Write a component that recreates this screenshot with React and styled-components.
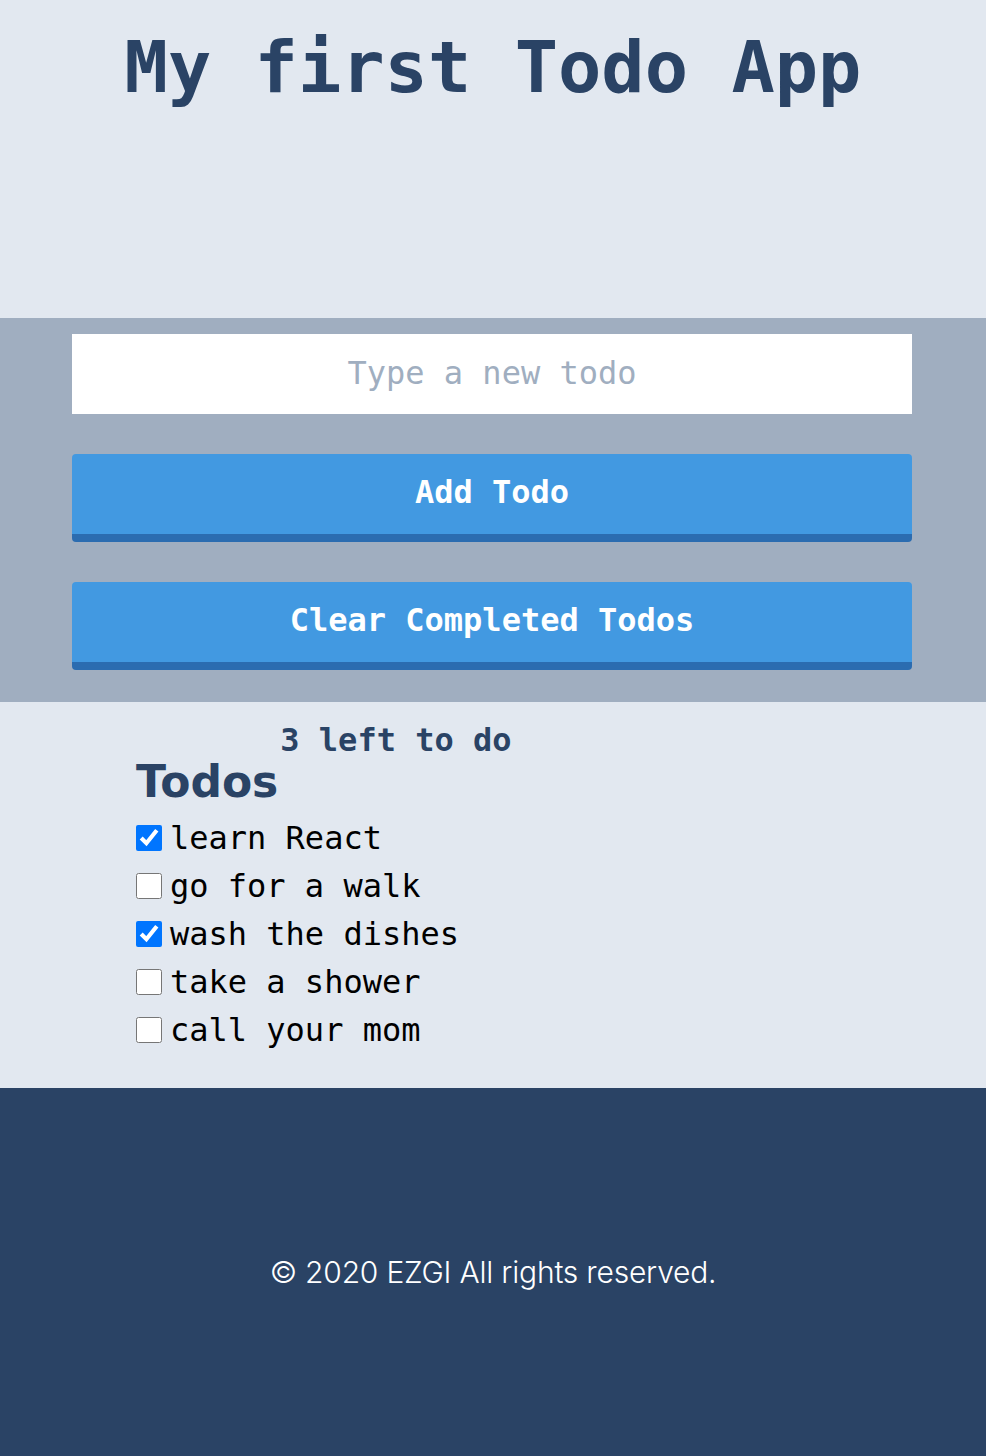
import React, { useState } from 'react';
import styled, { createGlobalStyle } from 'styled-components';

const colors = {
  light: '#e2e8f0',
  grey: '#a0aec0',
  navy: '#2a4365',
  blue: '#4299e1',
  blueDark: '#2b6cb0',
};

const initialTodos = [
  { id: 1, text: 'learn React', done: true },
  { id: 2, text: 'go for a walk', done: false },
  { id: 3, text: 'wash the dishes', done: true },
  { id: 4, text: 'take a shower', done: false },
  { id: 5, text: 'call your mom', done: false },
];

const App = () => {
  const [todos, setTodos] = useState(initialTodos);
  const [value, setValue] = useState('');
  const left = todos.filter((t) => !t.done).length;

  const toggle = (id) =>
    setTodos(todos.map((t) => (t.id === id ? { ...t, done: !t.done } : t)));

  const addTodo = () => {
    if (!value.trim()) return;
    setTodos([...todos, { id: Date.now(), text: value, done: false }]);
    setValue('');
  };

  return (
    <>
      <GlobalStyle />
      <Header>
        <Title>My first Todo App</Title>
      </Header>

      <FormSection>
        <Input
          placeholder="Type a new todo"
          value={value}
          onChange={(e) => setValue(e.target.value)}
        />
        <Button onClick={addTodo}>Add Todo</Button>
        <Button onClick={() => setTodos(todos.filter((t) => !t.done))}>
          Clear Completed Todos
        </Button>
      </FormSection>

      <TodoSection>
        <HeadingRow>
          <Heading>Todos</Heading>
          <Count>{left} left to do</Count>
        </HeadingRow>
        <List>
          {todos.map((todo) => (
            <Item key={todo.id}>
              <Check
                type="checkbox"
                checked={todo.done}
                onChange={() => toggle(todo.id)}
              />
              <span>{todo.text}</span>
            </Item>
          ))}
        </List>
      </TodoSection>

      <Footer>
        <p>© 2020 EZGI All rights reserved.</p>
      </Footer>
    </>
  );
};

const GlobalStyle = createGlobalStyle`
  body {
    margin: 0;
    background: ${colors.light};
    font-family: "DejaVu Sans Mono", monospace;
  }
`;

const Header = styled.header`
  height: 318px;
  padding-top: 25px;
  box-sizing: border-box;
`;

const Title = styled.h1`
  margin: 0;
  font-size: 72px;
  line-height: 84px;
  font-weight: 700;
  text-align: center;
  color: ${colors.navy};
`;

const FormSection = styled.section`
  display: flex;
  flex-direction: column;
  gap: 40px;
  padding: 16px 74px 32px 72px;
  background: ${colors.grey};
`;

const Input = styled.input`
  box-sizing: border-box;
  height: 80px;
  border: none;
  padding: 0 16px 3px;
  background: #fff;
  font-family: "DejaVu Sans Mono", monospace;
  font-size: 32px;
  text-align: center;
  color: ${colors.navy};
  outline: none;

  &::placeholder {
    color: ${colors.grey};
  }
`;

const Button = styled.button`
  box-sizing: border-box;
  height: 88px;
  border: none;
  border-bottom: 8px solid ${colors.blueDark};
  border-radius: 4px;
  padding: 0 0 4px;
  background: ${colors.blue};
  color: #fff;
  font-family: "DejaVu Sans Mono", monospace;
  font-size: 32px;
  font-weight: 700;
  cursor: pointer;
`;

const TodoSection = styled.section`
  padding: 20px 0 34px 136px;
`;

const HeadingRow = styled.div`
  display: flex;
  align-items: flex-start;
`;

const Heading = styled.h2`
  margin: 34px 0 0;
  font-family: "DejaVu Sans", sans-serif;
  font-size: 44px;
  line-height: 51px;
  font-weight: 700;
  color: ${colors.navy};
`;

const Count = styled.span`
  margin-left: 2px;
  font-size: 32px;
  line-height: 37px;
  font-weight: 700;
  color: ${colors.navy};
`;

const List = styled.ul`
  list-style: none;
  margin: 7px 0 0;
  padding: 0;
`;

const Item = styled.li`
  display: flex;
  align-items: center;
  gap: 8px;
  height: 48px;
  font-size: 32px;
  line-height: 37px;
  color: #000;
`;

const Check = styled.input`
  width: 26px;
  height: 26px;
  margin: 0;
`;

const Footer = styled.footer`
  height: 368px;
  display: flex;
  align-items: center;
  justify-content: center;
  background: ${colors.navy};

  p {
    margin: 0;
    font-family: Inter, sans-serif;
    font-size: 30px;
    font-weight: 300;
    letter-spacing: -0.2px;
    color: #fff;
  }
`;

export default App;
